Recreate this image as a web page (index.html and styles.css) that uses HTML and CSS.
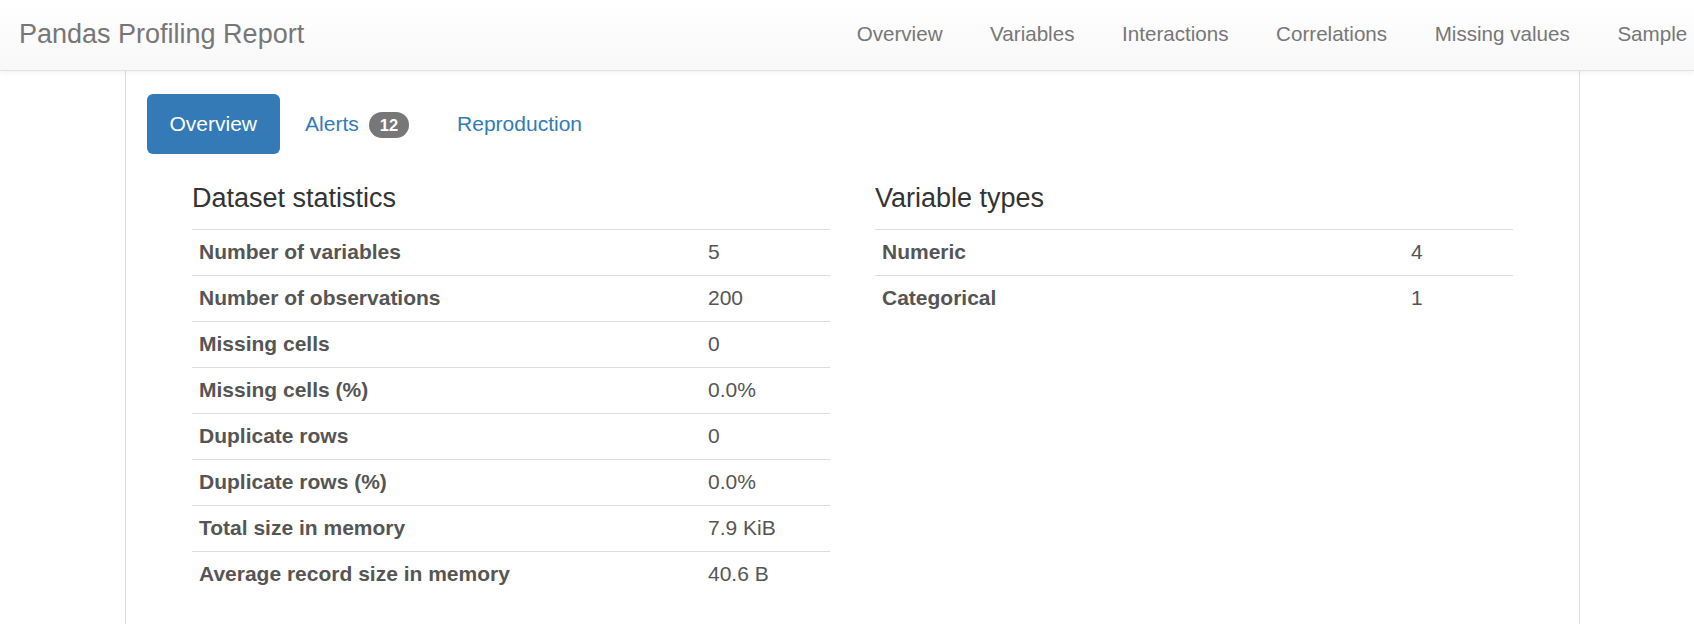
FILE: index.html
```html
<!DOCTYPE html>
<html lang="en">
<head>
<meta charset="utf-8">
<title>Pandas Profiling Report</title>
<link rel="stylesheet" href="styles.css">
</head>
<body>
<header class="navbar">
  <a class="brand" href="#">Pandas Profiling Report</a>
  <ul class="nav">
    <li><a href="#">Overview</a></li>
    <li><a href="#">Variables</a></li>
    <li><a href="#">Interactions</a></li>
    <li><a href="#">Correlations</a></li>
    <li><a href="#">Missing values</a></li>
    <li><a href="#">Sample</a></li>
  </ul>
</header>
<main class="container">
  <ul class="pills">
    <li class="active"><a href="#">Overview</a></li>
    <li><a href="#">Alerts<span class="badge">12</span></a></li>
    <li><a href="#">Reproduction</a></li>
  </ul>
  <div class="grid">
    <section>
      <h4 class="title">Dataset statistics</h4>
      <table class="stats stats-left">
        <colgroup><col class="c-label"><col></colgroup>
        <tbody>
          <tr><th>Number of variables</th><td>5</td></tr>
          <tr><th>Number of observations</th><td>200</td></tr>
          <tr><th>Missing cells</th><td>0</td></tr>
          <tr><th>Missing cells (%)</th><td>0.0%</td></tr>
          <tr><th>Duplicate rows</th><td>0</td></tr>
          <tr><th>Duplicate rows (%)</th><td>0.0%</td></tr>
          <tr><th>Total size in memory</th><td>7.9 KiB</td></tr>
          <tr><th>Average record size in memory</th><td>40.6 B</td></tr>
        </tbody>
      </table>
    </section>
    <section>
      <h4 class="title">Variable types</h4>
      <table class="stats stats-right">
        <colgroup><col class="c-label"><col></colgroup>
        <tbody>
          <tr><th>Numeric</th><td>4</td></tr>
          <tr><th>Categorical</th><td>1</td></tr>
        </tbody>
      </table>
    </section>
  </div>
</main>
</body>
</html>
```
FILE: styles.css
```css
html, body {
  margin: 0;
  padding: 0;
}

body {
  font-family: "Liberation Sans", Arial, Helvetica, sans-serif;
  color: #333;
  background: #fff;
  overflow-x: hidden;
}

a {
  text-decoration: none;
}

/* ---------- top navbar ---------- */
.navbar {
  position: relative;
  z-index: 2;
  display: flex;
  align-items: flex-start;
  height: 70px;
  border-bottom: 1px solid #e2e2e2;
  background: linear-gradient(to bottom, #ffffff 0%, #f8f8f8 100%);
  box-shadow: 0 1px 6px rgba(0, 0, 0, 0.07);
}

.brand {
  display: block;
  padding: 19px 0 0 19px;
  font-size: 27px;
  line-height: 30px;
  color: #777;
  white-space: nowrap;
}

.nav {
  display: flex;
  margin: 0 -17px 0 auto;
  padding: 0;
  list-style: none;
}

.nav a {
  display: block;
  padding: 19px 23.8px 0;
  font-size: 20.6px;
  line-height: 30px;
  color: #777;
  white-space: nowrap;
}

/* ---------- content container ---------- */
.container {
  box-sizing: border-box;
  width: 1455px;
  margin-left: 125px;
  min-height: calc(100vh - 71px);
  padding-top: 23px;
  border-left: 1px solid #dddddd;
  border-right: 1px solid #dddddd;
}

.pills {
  display: flex;
  margin: 0;
  padding: 0 0 0 21px;
  list-style: none;
}

.pills li + li {
  margin-left: 3px;
}

.pills a {
  display: block;
  padding: 15px 22.5px;
  font-size: 21px;
  line-height: 30px;
  color: #337ab7;
  border-radius: 6px;
  white-space: nowrap;
}

.pills .active a {
  background: #337ab7;
  color: #fff;
}

.badge {
  display: inline-block;
  margin-left: 10px;
  padding: 0 11px;
  height: 26px;
  font-size: 16.5px;
  font-weight: bold;
  line-height: 26px;
  color: #fff;
  background: #777;
  border-radius: 13px;
  vertical-align: baseline;
}

/* ---------- overview grid ---------- */
.grid {
  display: grid;
  grid-template-columns: 638px 638px;
  column-gap: 45px;
  padding-left: 66px;
}

.title {
  margin: 29px 0 16px;
  font-size: 27px;
  font-weight: normal;
  line-height: 30px;
  color: #333;
}

.stats {
  width: 100%;
  table-layout: fixed;
  border-collapse: collapse;
  font-size: 21px;
  line-height: 30px;
}

.stats-left .c-label {
  width: 509px;
}

.stats-right .c-label {
  width: 529px;
}

.stats th,
.stats td {
  padding: 7px 7px 8px 7px;
  border-top: 1px solid #dddddd;
  text-align: left;
  vertical-align: top;
  white-space: nowrap;
}

.stats th {
  font-weight: bold;
  color: #555;
}

.stats td {
  color: #555;
}
```
